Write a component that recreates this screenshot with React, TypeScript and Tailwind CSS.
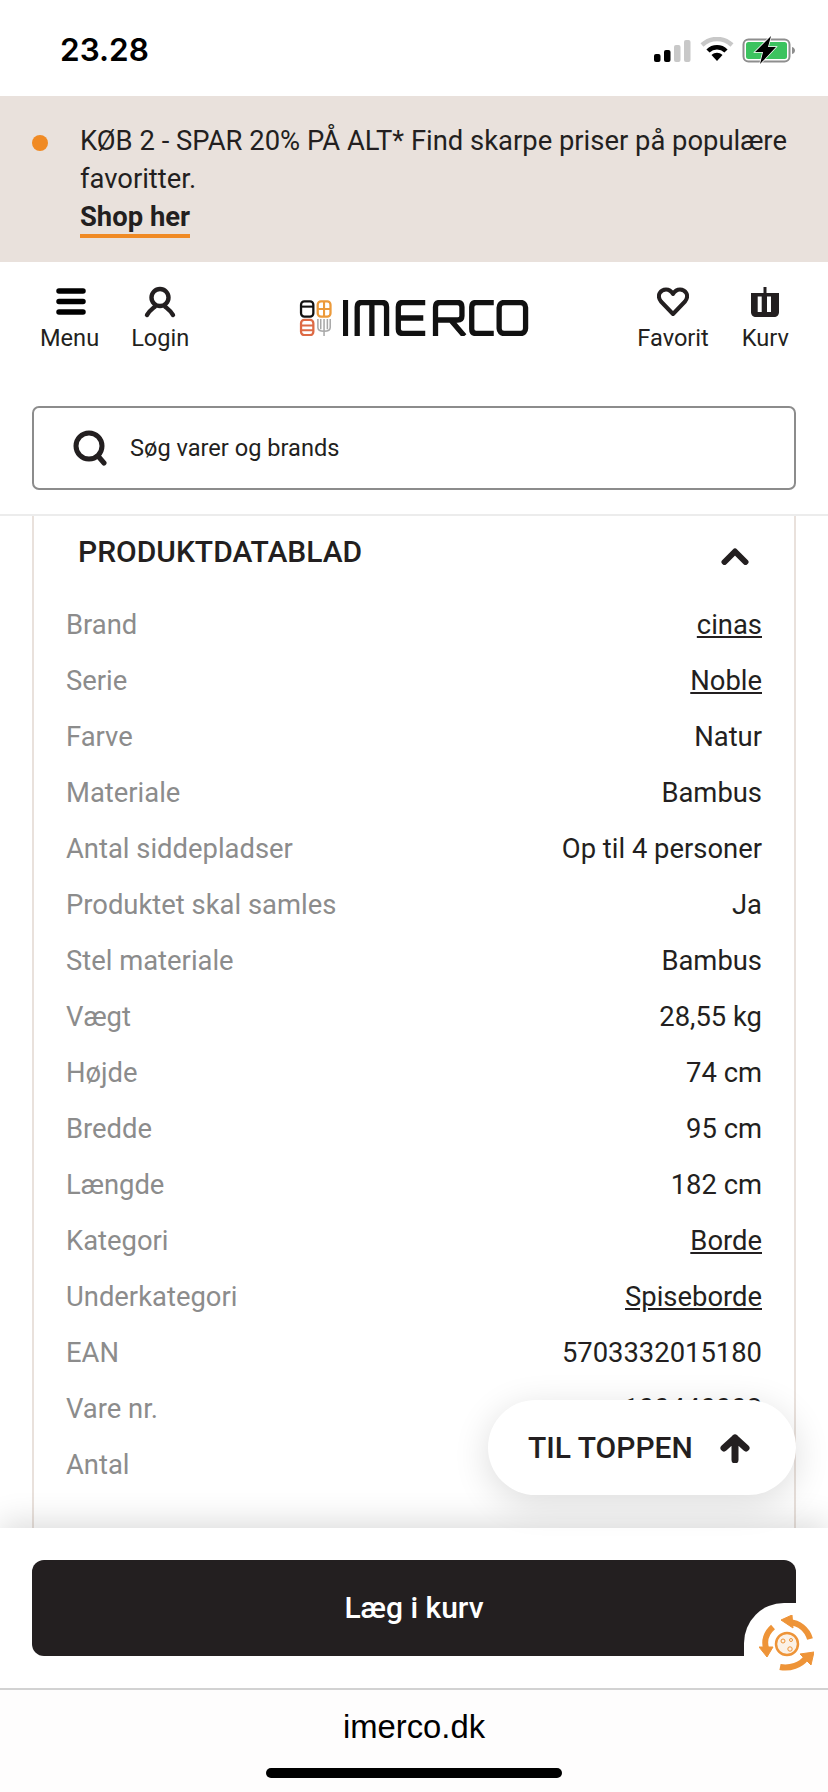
import React from 'react';

const FONT = "font-['Roboto',sans-serif]";

const rows: { label: string; value: string; link?: boolean }[] = [
  { label: 'Brand', value: 'cinas', link: true },
  { label: 'Serie', value: 'Noble', link: true },
  { label: 'Farve', value: 'Natur' },
  { label: 'Materiale', value: 'Bambus' },
  { label: 'Antal siddepladser', value: 'Op til 4 personer' },
  { label: 'Produktet skal samles', value: 'Ja' },
  { label: 'Stel materiale', value: 'Bambus' },
  { label: 'Vægt', value: '28,55 kg' },
  { label: 'Højde', value: '74 cm' },
  { label: 'Bredde', value: '95 cm' },
  { label: 'Længde', value: '182 cm' },
  { label: 'Kategori', value: 'Borde', link: true },
  { label: 'Underkategori', value: 'Spiseborde', link: true },
  { label: 'EAN', value: '5703332015180' },
  { label: 'Vare nr.', value: '100440002' },
  { label: 'Antal', value: '1 stk.' },
];

const StatusIcons = () => (
  <div className="flex items-center gap-[8px]">
    <svg width="38" height="24" viewBox="0 0 38 24">
      <rect x="0" y="16" width="6.500" height="8" rx="2" fill="#000" />
      <rect x="10" y="12" width="6.500" height="12" rx="2" fill="#000" />
      <rect x="20" y="7" width="6.500" height="17" rx="2" fill="#c8c8c8" />
      <rect x="30" y="2" width="6.500" height="22" rx="2" fill="#c8c8c8" />
    </svg>
    <svg width="34" height="26" viewBox="0 0 34 26">
      <path d="M2 8 C11 0 23 0 32 8" fill="none" stroke="#c8c8c8" strokeWidth="4.500" />
      <path d="M8 14 C13 9 21 9 26 14" fill="none" stroke="#000" strokeWidth="4.500" />
      <path d="M11.500 18 C15 15 19 15 22.500 18 L17 24 Z" fill="#000" />
    </svg>
    <svg width="54" height="28" viewBox="0 0 54 28">
      <rect x="1.500" y="3.500" width="46" height="22" rx="5" fill="none" stroke="#8e8e8e" strokeWidth="2" />
      <rect x="4" y="6" width="41" height="17" rx="2.500" fill="#3cc35f" />
      <path d="M50 11 C52 11.500 53 13 53 14.500 C53 16 52 17.500 50 18 Z" fill="#8e8e8e" />
      <path d="M29 0 L13 16 L21 16 L18 28 L34 11 L26 11 Z" fill="#000" stroke="#fff" strokeWidth="1.500" paintOrder="stroke" />
    </svg>
  </div>
);

const Logo = () => (
  <div className="flex items-center gap-[10px]">
    <svg width="34" height="36" viewBox="0 0 34 38" fill="none">
      <rect x="1.200" y="1.500" width="13" height="16" rx="3.500" stroke="#111" strokeWidth="2.400" />
      <path d="M1.500 7 H14" stroke="#111" strokeWidth="2.200" />
      <rect x="18.800" y="1.500" width="13.500" height="16" rx="3.500" stroke="#ec9a3a" strokeWidth="2.400" />
      <path d="M25.500 2 V17 M19 9.500 H32" stroke="#ec9a3a" strokeWidth="2.200" />
      <rect x="1.200" y="21" width="13" height="16" rx="3.500" stroke="#dd6a45" strokeWidth="2.400" />
      <path d="M1.500 27 H14 M1.500 32 H14" stroke="#dd6a45" strokeWidth="2.200" />
      <path d="M19 20 V29 C19 32 22 33 25.500 33 C29 33 32 32 32 29 V20 M25.500 20 V38 M22 20 V31 M29 20 V31" stroke="#a8a8a8" strokeWidth="1.600" />
    </svg>
    {/* wordmark: the brand's own lettering, drawn as a logo */}
    <svg width="186" height="36" viewBox="0 0 190 36" preserveAspectRatio="none" fill="none" stroke="#111" strokeWidth="5.400">
      <path d="M2.500 0 V36" />
      <path d="M14.500 36 V7 Q14.500 2.500 19 2.500 H40 Q44.500 2.500 44.500 7 V36 M29.500 2.500 V36" />
      <path d="M84 2.500 H61 Q56.500 2.500 56.500 7 V29 Q56.500 33.500 61 33.500 H84 M56.500 18 H82" />
      <path d="M94.500 36 V7 Q94.500 2.500 99 2.500 H117 Q121.500 2.500 121.500 7 V16 Q121.500 20 117 20 H94.500 M110 20 L124 36" />
      <path d="M154 2.500 H136 Q131.500 2.500 131.500 7 V29 Q131.500 33.500 136 33.500 H154" />
      <rect x="159.500" y="2.500" width="27" height="31" rx="5" />
    </svg>
  </div>
);

const NavItem = ({ label, children }: { label: string; children: React.ReactNode }) => (
  <div className="flex flex-col items-center">
    <div className="h-[38px] flex items-center justify-center">{children}</div>
    <span className="text-[23.600px] leading-[32px] mt-[1px] text-[#231f20]">{label}</span>
  </div>
);

const Badge = () => (
  <div className="absolute right-0 top-[1603px] w-[84px] h-[77px] bg-white rounded-tl-[40px] flex justify-center pt-[12px]">
    <svg width="55" height="57" viewBox="0 0 55 57" fill="none" stroke="#ee9438">
      <circle cx="28" cy="29" r="11" strokeWidth="2.500" fill="#fbf1e6" />
      <circle cx="24" cy="26" r="2" strokeWidth="1" />
      <circle cx="32" cy="25" r="1.500" strokeWidth="1" />
      <circle cx="31" cy="34" r="2.200" strokeWidth="1" />
      <path d="M30 7 C40 8 48 14 51 24" strokeWidth="6" />
      <path d="M22 5 L33 0 L34 13 Z" fill="#ee9438" strokeWidth="1" strokeLinejoin="round" />
      <path d="M14 12 C7 18 5 26 7 33" strokeWidth="6" />
      <path d="M0 32 L14 32 L8 42 Z" fill="#ee9438" strokeWidth="1" strokeLinejoin="round" />
      <path d="M21 52 C31 54 42 50 47 43" strokeWidth="6" />
      <path d="M41 39 L55 37 L52 50 Z" fill="#ee9438" strokeWidth="1" strokeLinejoin="round" />
    </svg>
  </div>
);

export default function App() {
  return (
    <div className={`relative h-[1792px] w-[828px] flex flex-col overflow-hidden bg-white ${FONT}`}>
      {/* iOS status bar */}
      <div className="h-[96px] shrink-0 flex items-center justify-between pl-[60px] pr-[32px] pt-[4px]">
        <span className="font-['Inter',sans-serif] text-[31.500px] font-semibold text-black">23.28</span>
        <StatusIcons />
      </div>

      {/* Campaign banner */}
      <div className="h-[166px] shrink-0 bg-[#e9e1dc] flex pl-[32px] pt-[26px] pr-[30px]">
        <div className="w-[16px] h-[16px] rounded-full bg-[#f08a24] mt-[13px] mr-[32px] shrink-0" />
        <div className="text-[27.400px] leading-[38px] text-[#231f20]">
          <p>KØB 2 - SPAR 20% PÅ ALT* Find skarpe priser på populære favoritter.</p>
          <a className="inline-block mt-[2px] font-bold border-b-[4px] border-[#f08a24] leading-[34px]">Shop her</a>
        </div>
      </div>

      {/* Header */}
      <div className="h-[144px] shrink-0 flex items-start justify-between pl-[40px] pr-[39px] pt-[21px] relative">
        <div className="flex gap-[32px]">
          <NavItem label="Menu">
            <svg className="ml-[2px]" width="32" height="28" viewBox="0 0 32 28">
              <path d="M4 3 H28 M4 13.500 H28 M4 24 H28" stroke="#000" strokeWidth="5.500" strokeLinecap="round" />
            </svg>
          </NavItem>
          <NavItem label="Login">
            <svg width="32" height="32" viewBox="0 0 32 32" fill="none" stroke="#231f20" strokeWidth="4.400" strokeLinecap="round">
              <circle cx="16" cy="11.500" r="8.500" />
              <path d="M3 29 C5 25 8 23 11 20.500 M29 29 C27 25 24 23 21 20.500" />
            </svg>
          </NavItem>
        </div>
        <div className="absolute left-[299px] top-[38px]">
          <Logo />
        </div>
        <div className="flex gap-[33px]">
          <NavItem label="Favorit">
            <svg width="32" height="30" viewBox="0 0 32 30" fill="none">
              <path d="M16 27 L4 14.500 C-1 8 4 2.500 9 2.500 C12 2.500 14.500 4.500 16 7 C17.500 4.500 20 2.500 23 2.500 C28 2.500 33 8 28 14.500 Z" stroke="#231f20" strokeWidth="4" strokeLinejoin="round" />
            </svg>
          </NavItem>
          <NavItem label="Kurv">
            <svg width="28" height="30" viewBox="0 0 28 30">
              <rect x="12.500" y="0" width="3" height="8" fill="#231f20" />
              <path d="M0 6 H28 V25 C28 28 26 30 23 30 H5 C2 30 0 28 0 25 Z" fill="#231f20" />
              <rect x="6.700" y="9.500" width="4" height="15.500" fill="#fff" />
              <rect x="16" y="9.500" width="4" height="15.500" fill="#fff" />
            </svg>
          </NavItem>
        </div>
      </div>

      {/* Search */}
      <div className="shrink-0 px-[32px] pb-[24px] border-b-2 border-[#ececec]">
        <div className="h-[84px] border-2 border-[#8c8c8c] rounded-[7px] flex items-center pl-[38px]">
          <svg width="36" height="36" viewBox="0 0 36 36" fill="none" stroke="#231f20">
            <circle cx="17" cy="16" r="13" strokeWidth="5" />
            <path d="M26 26 L32 33" strokeWidth="5" strokeLinecap="round" />
          </svg>
          <span className="ml-[22px] mt-[1px] text-[23.600px] text-[#231f20]">Søg varer og brands</span>
        </div>
      </div>

      {/* Product data, clipped by the sticky bottom bar */}
      <div className="flex-1 min-h-0 overflow-hidden px-[32px]">
        <div className="border-x-2 border-[#e9e1dc] h-[1200px]">
          <div className="flex items-start justify-between pl-[44px] pr-[45px] pt-[18px]">
            <h2 className="text-[30px] leading-[36px] font-medium text-[#231f20]">PRODUKTDATABLAD</h2>
            <svg className="mt-[13px]" width="28" height="18" viewBox="0 0 28 18" fill="none" stroke="#231f20" strokeWidth="6" strokeLinecap="round" strokeLinejoin="round">
              <path d="M3.500 15 L14 4.500 L24.500 15" />
            </svg>
          </div>
          <div className="px-[32px] pt-[28px]">
            {rows.map((r) => (
              <div key={r.label} className="h-[56px] flex items-center justify-between text-[27.400px]">
                <span className="text-[#8c8c8c]">{r.label}</span>
                <span className={`text-[#231f20] ${r.link ? 'underline' : ''}`}>{r.value}</span>
              </div>
            ))}
          </div>
        </div>
      </div>

      {/* Sticky add to cart */}
      <div className="relative shrink-0 h-[160px] bg-white px-[32px] pt-[32px] shadow-[0_-6px_30px_rgba(0,0,0,0.14)]">
        <button className="w-full h-[96px] pb-[2px] bg-[#231f20] rounded-[12px] text-white text-[30px] font-medium">Læg i kurv</button>
      </div>

      {/* Safari address bar */}
      <div className="relative shrink-0 h-[104px] border-t-2 border-[#d2d2d2] bg-[#fefdfd] flex flex-col items-center">
        <span className="font-['Liberation_Sans',sans-serif] text-[32.800px] leading-[36px] mt-[19px] text-black">imerco.dk</span>
        <div className="w-[296px] h-[10px] rounded-full bg-black mt-[23px]" />
      </div>

      {/* Floating elements */}
      <div className="absolute left-[488px] top-[1400px] w-[308px] h-[95px] bg-white rounded-full shadow-[0_8px_36px_rgba(0,0,0,0.14)] flex items-center pl-[40px]">
        <span className="text-[30px] font-medium text-[#231f20]">TIL TOPPEN</span>
        <svg className="ml-[26px]" width="32" height="30" viewBox="0 0 32 30" fill="none" stroke="#231f20" strokeWidth="7" strokeLinecap="round" strokeLinejoin="round">
          <path d="M16 27 V5 M5 15 L16 5 L27 15" />
        </svg>
      </div>
      <Badge />
    </div>
  );
}
